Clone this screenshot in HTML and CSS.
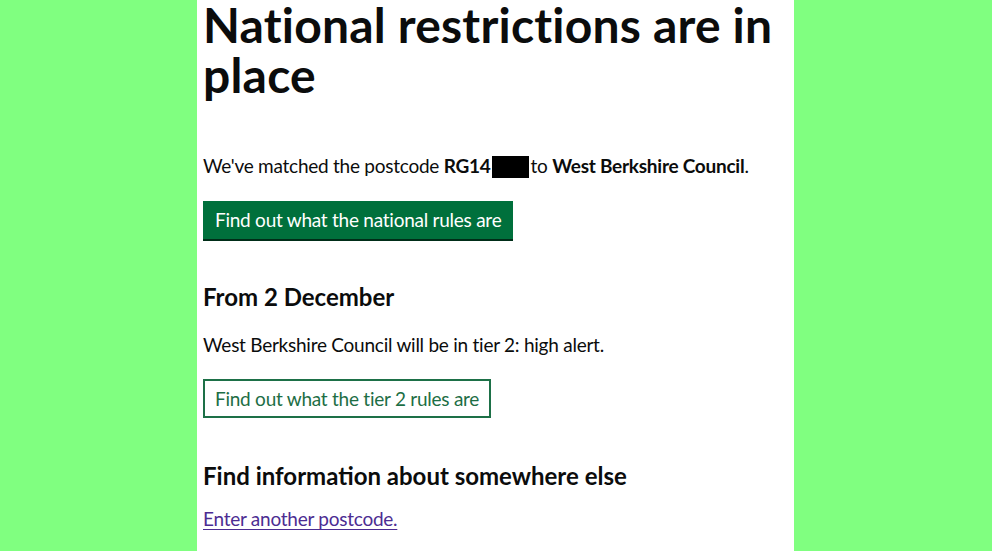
FILE: index.html
```html
<!DOCTYPE html>
<html lang="en">
<head>
<meta charset="utf-8">
<title>National restrictions are in place</title>
<link rel="stylesheet" href="styles.css">
</head>
<body>
<main class="page">
  <h1 class="heading-xl">National restrictions are in place</h1>
  <p class="body">We've matched the postcode <strong>RG14</strong><span class="redact"></span>to <strong>West Berkshire Council</strong>.</p>
  <a class="button" href="#">Find out what the national rules are</a>
  <h2 class="heading-m">From 2 December</h2>
  <p class="body body-tight">West Berkshire Council will be in tier 2: high alert.</p>
  <a class="button button-secondary" href="#">Find out what the tier 2 rules are</a>
  <h2 class="heading-m heading-last">Find information about somewhere else</h2>
  <p class="body"><a class="link" href="#">Enter another postcode.</a></p>
</main>
</body>
</html>
```

FILE: styles.css
```css
html, body {
  margin: 0;
  padding: 0;
  background: #80ff80;
  height: 100%;
}
body {
  font-family: Lato, "Liberation Sans", Arial, sans-serif;
  color: #0b0c0c;
  overflow: hidden;
}
.page {
  box-sizing: border-box;
  width: 597px;
  min-height: 100%;
  margin: 0 0 0 calc(50% - 299px);
  padding: 0 0 0 6px;
  background: #ffffff;
  display: flex;
  flex-direction: column;
  align-items: flex-start;
}
.heading-xl {
  font-size: 48px;
  line-height: 50px;
  font-weight: 700;
  letter-spacing: 0.2px;
  margin: 0 0 53px;
}
.heading-m {
  font-size: 24px;
  line-height: 30px;
  font-weight: 700;
  margin: 0 0 20px;
}
.heading-last {
  margin-bottom: 15px;
}
.body {
  font-size: 19px;
  line-height: 25px;
  letter-spacing: -0.25px;
  margin: 0 0 23px;
}
.body-tight {
  margin-bottom: 22px;
}
.body strong {
  font-weight: 700;
}
.redact {
  display: inline-block;
  width: 37px;
  height: 22px;
  background: #000;
  vertical-align: -5px;
  margin: 0 2px 0 1px;
}
.button {
  display: inline-block;
  font-size: 19px;
  line-height: 19px;
  letter-spacing: -0.25px;
  padding: 9px 12px 10px;
  background: #00703c;
  color: #ffffff;
  text-decoration: none;
  box-shadow: 0 2px 0 #002d18;
  margin-bottom: 43px;
}
.button-secondary {
  background: #ffffff;
  color: #1d6e45;
  border: 2px solid #1d7047;
  padding: 8px 10px 8px;
  box-shadow: none;
}
.link {
  color: #4c2c92;
  text-decoration: underline;
  text-decoration-thickness: 1px;
  text-underline-offset: 3px;
}
```
